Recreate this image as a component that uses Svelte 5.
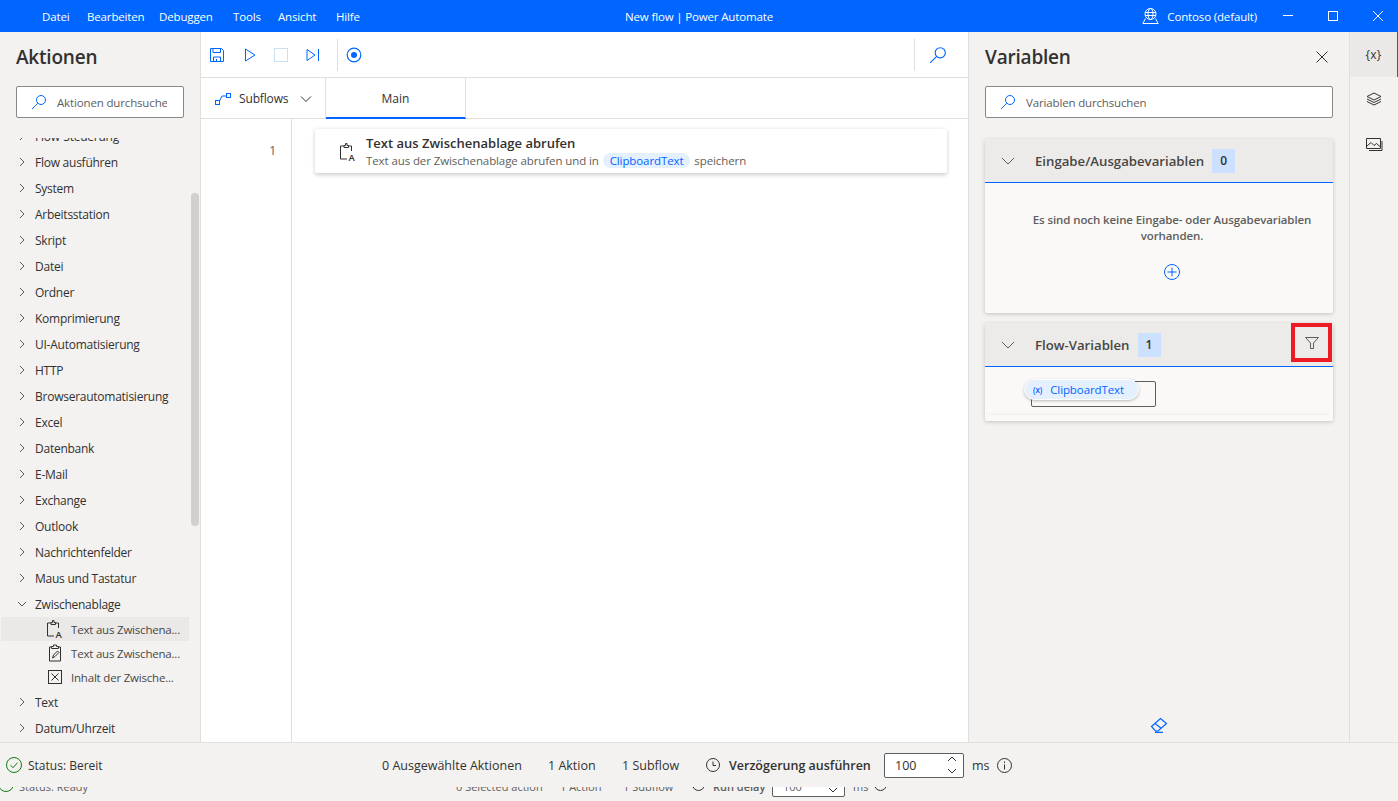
<script>
    const menus = ["Datei", "Bearbeiten", "Debuggen", "Tools", "Ansicht", "Hilfe"];
    const groupsTop = [
        "Flow ausführen", "System", "Arbeitsstation", "Skript", "Datei", "Ordner",
        "Komprimierung", "UI-Automatisierung", "HTTP", "Browserautomatisierung", "Excel",
        "Datenbank", "E-Mail", "Exchange", "Outlook", "Nachrichtenfelder", "Maus und Tastatur",
    ];
    const groupsBottom = ["Text", "Datum/Uhrzeit"];
</script>

<div class="app">
    <header class="titlebar">
        <nav class="menu">
            {#each menus as m}
                <span>{m}</span>
            {/each}
        </nav>
        <div class="title">New flow | Power Automate</div>
        <div class="right">
            <div class="env">
                <svg width="17" height="16" viewBox="0 0 17 16" fill="none" stroke="#fff" stroke-width="1">
                    <circle cx="8.500" cy="6" r="5.500" />
                    <ellipse cx="8.500" cy="6" rx="2.500" ry="5.500" />
                    <path d="M3 4.500h11M3 7.500h11M3.500 10.500 .8 15.500h15.400L13.500 10.500" />
                </svg>
                <span>Contoso (default)</span>
            </div>
            <div class="winbtns">
                <svg width="12" height="12" viewBox="0 0 12 12" stroke="#fff" fill="none"><path d="M1 5.500h10" /></svg>
                <svg width="12" height="12" viewBox="0 0 12 12" stroke="#fff" fill="none"><rect x="1.500" y="1.500" width="9" height="9" /></svg>
                <svg width="12" height="12" viewBox="0 0 12 12" stroke="#fff" fill="none"><path d="M1 1l10 10M11 1 1 11" /></svg>
            </div>
        </div>
    </header>

    <div class="body">
        <aside class="actions">
            <h1>Aktionen</h1>
            <div class="search small">
                <svg class="loupe" width="16" height="16" viewBox="0 0 16 16" fill="none" stroke="#0066ff">
                    <circle cx="10" cy="6" r="4.500" /><path d="M6.800 9.200 1 15" />
                </svg>
                <span class="ph">Aktionen durchsuchen</span>
            </div>
            <div class="tree">
                <div class="group cut">
                    <svg class="chev" width="8" height="10" viewBox="0 0 8 10" fill="none" stroke="#605e5c"><path d="M2 1l4 4-4 4" /></svg>
                    <span>Flow-Steuerung</span>
                </div>
                {#each groupsTop as g}
                    <div class="group">
                        <svg class="chev" width="8" height="10" viewBox="0 0 8 10" fill="none" stroke="#605e5c"><path d="M2 1l4 4-4 4" /></svg>
                        <span>{g}</span>
                    </div>
                {/each}
                <div class="group">
                    <svg class="chev" width="8" height="10" viewBox="0 0 8 10" fill="none" stroke="#605e5c"><path d="M0 3l4 4 4-4" /></svg>
                    <span>Zwischenablage</span>
                </div>
                <div class="leaf active">
                    <svg width="16" height="18" viewBox="0 0 16 18" fill="none" stroke="#323130">
                        <path d="M4 3H.5v13H7M11.500 8V3H8.500M4 4.500V2.500h1.500V.5h1.500v2h1.500v2z" />
                        <text x="8.500" y="18" class="a">A</text>
                    </svg>
                    <span>Text aus Zwischena...</span>
                </div>
                <div class="leaf">
                    <svg width="16" height="18" viewBox="0 0 16 18" fill="none" stroke="#323130">
                        <path d="M4.500 3H2.500v14h11V3h-2M4.500 4.500V2.500h2V1h3v1.500h2v2zM5.500 14l1-3 4-4 1.500 1.500-4 4z" />
                    </svg>
                    <span>Text aus Zwischena...</span>
                </div>
                <div class="leaf">
                    <svg width="16" height="18" viewBox="0 0 16 18" fill="none" stroke="#323130">
                        <rect x="1.500" y="2.500" width="13" height="13" /><path d="M4.500 5.500l7 7M11.500 5.500l-7 7" />
                    </svg>
                    <span>Inhalt der Zwische...</span>
                </div>
                {#each groupsBottom as g}
                    <div class="group">
                        <svg class="chev" width="8" height="10" viewBox="0 0 8 10" fill="none" stroke="#605e5c"><path d="M2 1l4 4-4 4" /></svg>
                        <span>{g}</span>
                    </div>
                {/each}
            </div>
            <div class="thumb"></div>
        </aside>

        <main class="editor">
            <div class="toolbar">
                <svg width="16" height="16" viewBox="0 0 16 16" fill="none" stroke="#0066ff">
                    <path d="M1.500 1.500h11l2 2v11h-13zM4 1.500v4h7.500v-4M4.500 14.500V10h7v4.500M7.500 12v2.500" />
                </svg>
                <svg class="gap1" width="14" height="16" viewBox="0 0 14 16" fill="none" stroke="#0066ff"><path d="M2.500 2v12l9.500-6z" /></svg>
                <svg class="gap2" width="14" height="14" viewBox="0 0 14 14" fill="none" stroke="#c7e0f4" stroke-width="1"><rect x="0.500" y="0.500" width="13" height="13" /></svg>
                <svg class="gap3" width="14" height="14" viewBox="0 0 14 14" fill="none" stroke="#0066ff"><path d="M1 1.500v11l8-5.500zM12.500 1v12" /></svg>
                <div class="tsep"></div>
                <svg width="16" height="16" viewBox="0 0 16 16" fill="#0066ff" stroke="#0066ff"><circle cx="8" cy="8" r="6.800" fill="none" stroke-width="1.200" /><circle cx="8" cy="8" r="3" stroke="none" /></svg>
                <div class="spacer"></div>
                <div class="tsep end"></div>
                <svg class="loupe2" width="18" height="18" viewBox="0 0 16 16" fill="none" stroke="#0066ff">
                    <circle cx="10" cy="6" r="4.500" /><path d="M6.800 9.200 1 15" />
                </svg>
            </div>
            <div class="tabs">
                <div class="subflows">
                    <svg width="16" height="12" viewBox="0 0 16 12" fill="none" stroke="#0066ff">
                        <rect x="0.500" y="7.500" width="4" height="4" /><rect x="11.500" y="0.500" width="4" height="4" /><path d="M4.500 8 7 3h4" />
                    </svg>
                    <span>Subflows</span>
                    <svg class="sub-chev" width="12" height="8" viewBox="0 0 12 8" fill="none" stroke="#323130"><path d="M1 1.500l5 5 5-5" /></svg>
                </div>
                <div class="tab">Main</div>
            </div>
            <div class="canvas">
                <div class="gutter">1</div>
                <div class="flow">
                    <div class="step">
                        <svg width="18" height="18" viewBox="0 0 16 18" fill="none" stroke="#323130">
                            <path d="M4 3H.5v13H7M11.500 8V3H8.500M4 4.500V2.500h1.500V.5h1.500v2h1.500v2z" />
                            <text x="8.500" y="18" class="a">A</text>
                        </svg>
                        <div class="step-text">
                            <div class="step-title">Text aus Zwischenablage abrufen</div>
                            <div class="step-sub">
                                Text aus der Zwischenablage abrufen und in
                                <span class="pill">ClipboardText</span>
                                speichern
                            </div>
                        </div>
                    </div>
                </div>
            </div>
        </main>

        <aside class="vars">
            <div class="vars-head">
                <h1>Variablen</h1>
                <svg width="12" height="12" viewBox="0 0 12 12" fill="none" stroke="#323130"><path d="M.5.500l11 11M11.500.500l-11 11" /></svg>
            </div>
            <div class="search wide">
                <svg class="loupe" width="16" height="16" viewBox="0 0 16 16" fill="none" stroke="#0066ff">
                    <circle cx="10" cy="6" r="4.500" /><path d="M6.800 9.200 1 15" />
                </svg>
                <span class="ph">Variablen durchsuchen</span>
            </div>

            <section class="panel">
                <div class="panel-head">
                    <svg width="14" height="8" viewBox="0 0 14 8" fill="none" stroke="#605e5c"><path d="M1 1l6 6 6-6" /></svg>
                    <span class="panel-title">Eingabe/Ausgabevariablen</span>
                    <span class="count">0</span>
                </div>
                <div class="panel-empty">
                    <p>Es sind noch keine Eingabe- oder Ausgabevariablen vorhanden.</p>
                    <svg width="18" height="18" viewBox="0 0 18 18" fill="none" stroke="#0066ff"><circle cx="9" cy="9" r="7.500" /><path d="M9 4.500v9M4.500 9h9" /></svg>
                </div>
            </section>

            <section class="panel second">
                <div class="panel-head">
                    <svg width="14" height="8" viewBox="0 0 14 8" fill="none" stroke="#605e5c"><path d="M1 1l6 6 6-6" /></svg>
                    <span class="panel-title">Flow-Variablen</span>
                    <span class="count">1</span>
                    <div class="filter">
                        <svg width="14" height="14" viewBox="0 0 14 14" fill="none" stroke="#605e5c"><path d="M.5 1.500h13L8.500 7v5.500h-3V7z" /></svg>
                    </div>
                </div>
                <div class="var-row">
                    <div class="var-box"></div>
                    <div class="var-chip"><span class="x">(x)</span>ClipboardText</div>
                </div>
            </section>

            <div class="spacer"></div>
            <div class="eraser">
                <svg width="18" height="16" viewBox="0 0 18 16" fill="none" stroke="#0066ff" stroke-width="1.200">
                    <path d="M1.500 9.500 10.500 1.500l6 5-8.500 7.500H5.500zM5 6.500l6.500 5M5 15.300h8" />
                </svg>
            </div>
        </aside>

        <div class="rail">
            <div class="rail-btn on">&#123;x&#125;</div>
            <div class="rail-btn">
                <svg width="16" height="15" viewBox="0 0 16 15" fill="none" stroke="#323130">
                    <path d="M8 1l7 3.500L8 8 1 4.500zM1 7 8 10.500 15 7M1 9.500 8 13 15 9.500" />
                </svg>
            </div>
            <div class="rail-btn">
                <svg width="17" height="15" viewBox="0 0 17 15" fill="none" stroke="#323130">
                    <path d="M.5 1.500h14v10H.5zM16 4v9.500H3M1 9l4-3.500 3 3 2.500-2 4 3.500" />
                </svg>
            </div>
        </div>
    </div>

    <footer class="status">
        <div class="status-main">
            <div class="ok">
                <svg width="16" height="16" viewBox="0 0 16 16" fill="none" stroke="#107c10"><circle cx="8" cy="8" r="7.500" /><path d="M4.500 8.200l2.500 2.500 4.500-5" /></svg>
                <span>Status: Bereit</span>
            </div>
            <span class="s1">0 Ausgewählte Aktionen</span>
            <span class="s2">1 Aktion</span>
            <span class="s3">1 Subflow</span>
            <svg class="clock" width="14" height="14" viewBox="0 0 14 14" fill="none" stroke="#323130"><circle cx="7" cy="7" r="6.500" /><path d="M7 3.500V7.500h3" /></svg>
            <b>Verzögerung ausführen</b>
            <div class="delay">
                <span>100</span>
                <svg width="10" height="18" viewBox="0 0 10 18" fill="none" stroke="#323130"><path d="M1 5l4-4 4 4M1 13l4 4 4-4" /></svg>
            </div>
            <span class="ms">ms</span>
            <svg class="info" width="15" height="15" viewBox="0 0 15 15" fill="none" stroke="#323130"><circle cx="7.500" cy="7.500" r="7" /><path d="M7.500 6.500v5M7.500 3.500v1.500" /></svg>
        </div>
        <div class="ghost">
            <div class="ghost-inner">
                <svg class="g-ok" width="16" height="16" viewBox="0 0 16 16" fill="none" stroke="#107c10"><circle cx="8" cy="8" r="7.500" /></svg>
                <span class="g0">Status: Ready</span>
                <span class="g1">0 Selected action</span>
                <span class="g2">1 Action</span>
                <span class="g3">1 Subflow</span>
                <svg class="g-clock" width="13" height="13" viewBox="0 0 13 13" fill="none" stroke="#323130"><circle cx="6.500" cy="6.500" r="6" /></svg>
                <b class="g4">Run delay</b>
                <div class="g-input">
                    <span>100</span>
                    <svg width="10" height="18" viewBox="0 0 10 18" fill="none" stroke="#323130"><path d="M1 13l4 4 4-4" /></svg>
                </div>
                <span class="g6">ms</span>
                <svg class="g-info" width="13" height="13" viewBox="0 0 13 13" fill="none" stroke="#323130"><circle cx="6.500" cy="6.500" r="6" /></svg>
            </div>
        </div>
    </footer>
</div>

<style>
    :global(body) {
        margin: 0;
        background: #f3f2f1;
    }

    * {
        box-sizing: border-box;
    }

    .app {
        width: 1398px;
        height: 801px;
        display: flex;
        flex-direction: column;
        overflow: hidden;
        font-family: "Open Sans", "Noto Sans", sans-serif;
        font-size: 12px;
        color: #323130;
    }

    .titlebar {
        height: 32px;
        flex: none;
        background: #0066ff;
        color: #fff;
        display: grid;
        grid-template-columns: 1fr auto 1fr;
        align-items: center;
        font-size: 11.500px;
        letter-spacing: -0.15px;
    }

    .menu {
        display: grid;
        grid-template-columns: 45px 72px 74px 45px 58px auto;
        padding-left: 42px;
    }

    .title {
        text-align: center;
        width: 240px;
    }

    .right {
        display: flex;
        justify-content: flex-end;
        align-items: center;
    }

    .env {
        display: flex;
        align-items: center;
        gap: 8px;
        margin-right: 25px;
    }

    .winbtns {
        display: flex;
        gap: 33px;
        padding-right: 14px;
    }

    .body {
        flex: 1;
        display: flex;
        min-height: 0;
    }

    h1 {
        margin: 0;
        font-size: 19px;
        font-weight: 600;
        line-height: 28px;
        letter-spacing: -0.2px;
    }

    .actions {
        width: 201px;
        border-right: 1px solid #e1dfdd;
        position: relative;
        padding-top: 11px;
        display: flex;
        flex-direction: column;
    }

    .actions h1 {
        padding-left: 16px;
    }

    .search {
        height: 32px;
        flex: none;
        background: #fff;
        border: 1px solid #8a8886;
        border-radius: 2px;
        display: flex;
        align-items: center;
        overflow: hidden;
        white-space: nowrap;
        padding-left: 14px;
        gap: 10px;
        font-size: 11.500px;
        letter-spacing: -0.15px;
    }

    .search.small {
        margin: 15px 0 0 16px;
        width: 168px;
    }

    .search.small .ph {
        width: 110px;
        overflow: hidden;
    }

    .search.wide {
        margin-top: 15px;
        width: 348px;
    }

    .ph {
        color: #605e5c;
    }

    .tree {
        margin-top: 20px;
        flex: 1;
        min-height: 0;
        overflow: hidden;
        letter-spacing: -0.25px;
    }

    .group {
        height: 26px;
        display: flex;
        align-items: center;
        padding-left: 18px;
        gap: 9px;
    }

    .group.cut {
        margin-top: -15px;
    }

    .leaf {
        height: 24px;
        width: 188px;
        margin-left: 1px;
        display: flex;
        align-items: center;
        padding-left: 46px;
        gap: 8px;
        color: #484644;
        white-space: nowrap;
        font-size: 11.500px;
        letter-spacing: -0.2px;
    }

    .leaf.active {
        background: #ebe9e8;
    }

    .a {
        font-size: 9.500px;
        fill: #323130;
        stroke: none;
        font-family: "Open Sans", sans-serif;
        font-weight: 600;
    }

    .thumb {
        position: absolute;
        left: 191px;
        top: 161px;
        width: 8px;
        height: 333px;
        border-radius: 4px;
        background: #d2d0ce;
    }

    .editor {
        width: 767px;
        background: #fff;
        display: flex;
        flex-direction: column;
    }

    .toolbar {
        height: 46px;
        border-bottom: 1px solid #e1dfdd;
        display: flex;
        align-items: center;
        padding-left: 8px;
    }

    .gap1 {
        margin-left: 18px;
    }

    .gap2 {
        margin-left: 17px;
    }

    .gap3 {
        margin-left: 18px;
    }

    .tsep {
        width: 1px;
        height: 32px;
        background: #e1dfdd;
        margin: 0 8px 0 17px;
    }

    .tsep.end {
        margin: 0;
    }

    .loupe2 {
        margin: 0 21px 0 14px;
    }

    .spacer {
        flex: 1;
    }

    .tabs {
        height: 41px;
        border-bottom: 1px solid #e1dfdd;
        display: flex;
    }

    .subflows {
        width: 125px;
        border-right: 1px solid #e1dfdd;
        display: flex;
        align-items: center;
        padding: 1px 0 0 14px;
        gap: 8px;
        font-weight: 500;
        letter-spacing: -0.15px;
    }

    .sub-chev {
        margin-left: 4px;
    }

    .tab {
        width: 140px;
        border-right: 1px solid #e1dfdd;
        border-bottom: 2px solid #0066ff;
        margin-bottom: -1px;
        padding-top: 2px;
        display: flex;
        align-items: center;
        justify-content: center;
        font-weight: 500;
    }

    .canvas {
        flex: 1;
        display: flex;
    }

    .gutter {
        width: 91px;
        border-right: 1px solid #e1dfdd;
        text-align: right;
        padding: 24px 15px 0 0;
        line-height: 16px;
        color: #605e5c;
    }

    .flow {
        flex: 1;
        padding: 10px 21px 0 23px;
    }

    .step {
        height: 44px;
        display: flex;
        align-items: center;
        padding: 1px 0 0 24px;
        gap: 9px;
        background: #fff;
        box-shadow: 0 1.500px 4px rgba(0, 0, 0, 0.2);
        border-radius: 2px;
    }

    .step-title {
        font-size: 13px;
        font-weight: 600;
        line-height: 17px;
    }

    .step-sub {
        color: #605e5c;
        font-size: 11.500px;
        letter-spacing: -0.1px;
        line-height: 17px;
        white-space: nowrap;
    }

    .pill {
        display: inline-block;
        background: #e5f0ff;
        color: #0066ff;
        border-radius: 8px;
        padding: 0 7px;
        margin: 0 1px;
        line-height: 15px;
    }

    .vars {
        width: 382px;
        border-left: 1px solid #e1dfdd;
        border-right: 1px solid #e1dfdd;
        padding: 11px 16px 0 16px;
        display: flex;
        flex-direction: column;
    }

    .vars-head {
        display: flex;
        align-items: center;
        justify-content: space-between;
        padding-right: 5px;
    }

    .panel {
        margin-top: 21px;
        width: 348px;
        background: #faf9f8;
        border-radius: 2px;
        box-shadow: 0 1px 4px rgba(0, 0, 0, 0.2);
    }

    .panel.second {
        margin-top: 10px;
    }

    .panel-head {
        height: 44px;
        background: #edebe9;
        border-bottom: 1px solid #0066ff;
        display: flex;
        align-items: center;
        padding-left: 16px;
        position: relative;
    }

    .panel-title {
        margin-left: 20px;
        font-size: 13.200px;
        font-weight: 600;
        color: #484644;
    }

    .count {
        margin-left: 8px;
        width: 23px;
        height: 24px;
        background: #cce0ff;
        display: flex;
        align-items: center;
        justify-content: center;
        font-weight: 600;
    }

    .filter {
        position: absolute;
        left: 306px;
        top: 0;
        width: 41px;
        height: 39px;
        border: 4px solid #ed1c24;
        display: flex;
        align-items: center;
        justify-content: center;
    }

    .panel-empty {
        height: 130px;
        padding: 29px 0 0 26px;
        display: flex;
        flex-direction: column;
        align-items: center;
        color: #605e5c;
    }

    .panel-empty p {
        margin: 0 0 19px;
        width: 290px;
        text-align: center;
        line-height: 16px;
        font-size: 11.500px;
        letter-spacing: -0.1px;
        font-weight: 600;
    }

    .var-row {
        height: 54px;
        position: relative;
    }

    .var-row::after {
        content: "";
        position: absolute;
        left: 4px;
        right: 4px;
        bottom: 6px;
        height: 2px;
        background: #f3f2f1;
    }

    .var-box {
        position: absolute;
        left: 46px;
        top: 14px;
        width: 125px;
        height: 26px;
        border: 1px solid #605e5c;
        border-radius: 2px;
    }

    .var-chip {
        position: absolute;
        left: 39px;
        top: 12px;
        width: 115px;
        height: 21px;
        border-radius: 11px;
        background: #e5f0ff;
        color: #0066ff;
        display: flex;
        align-items: center;
        padding-left: 8px;
        box-shadow: 0 1px 3px rgba(0, 0, 0, 0.25);
        border: 1px solid #fff;
        white-space: nowrap;
        font-size: 11.500px;
        letter-spacing: -0.1px;
    }

    .x {
        font-size: 8px;
        margin-right: 8px;
        font-weight: 600;
    }

    .eraser {
        height: 34px;
        display: flex;
        align-items: center;
        justify-content: center;
        width: 348px;
    }

    .rail {
        flex: 1;
        background: #f3f2f1;
    }

    .rail-btn {
        height: 45px;
        display: flex;
        align-items: center;
        justify-content: center;
    }

    .rail-btn.on {
        background: #ebe9e8;
        border-right: 1px solid #0066ff;
        font-size: 12px;
        letter-spacing: 0.3px;
    }

    .status {
        height: 59px;
        flex: none;
        border-top: 1px solid #e1dfdd;
        background: #f3f2f1;
        display: flex;
        flex-direction: column;
    }

    .status-main {
        height: 44px;
        display: flex;
        align-items: center;
        white-space: nowrap;
        flex: none;
        font-size: 12.500px;
    }

    .ok {
        display: flex;
        align-items: center;
        gap: 6px;
        padding-left: 6px;
        width: 382px;
        font-size: 12px;
    }

    .s1 {
        width: 166px;
    }

    .s2 {
        width: 74px;
    }

    .s3 {
        width: 84px;
    }

    .clock {
        margin-right: 9px;
    }

    .status-main b {
        font-weight: 600;
        width: 155px;
    }

    .delay {
        width: 80px;
        height: 25px;
        background: #fff;
        border: 1px solid #605e5c;
        border-radius: 2px;
        display: flex;
        align-items: center;
        justify-content: space-between;
        padding: 0 6px 0 10px;
    }

    .ms {
        margin-left: 8px;
        width: 25px;
    }

    .ghost {
        flex: 1;
        overflow: hidden;
    }

    .ghost-inner {
        margin-top: -16px;
        height: 26px;
        display: flex;
        align-items: center;
        color: #605e5c;
        white-space: nowrap;
        font-size: 11px;
    }

    .ghost-inner span,
    .ghost-inner b {
        padding-top: 5px;
    }

    .g-ok {
        margin-left: -2px;
        margin-right: 5px;
        flex: none;
    }

    .g0 { width: 437px; }
    .g1 { width: 104px; }
    .g2 { width: 63px; }
    .g3 { width: 69px; }

    .g-clock {
        flex: none;
        margin-right: 8px;
    }

    .g4 {
        width: 59px;
        font-weight: 600;
    }

    .g-input {
        width: 73px;
        height: 25px;
        background: #fff;
        border: 1px solid #605e5c;
        border-radius: 2px;
        display: flex;
        align-items: center;
        justify-content: space-between;
        padding: 0 6px 0 10px;
    }

    .g6 {
        margin-left: 8px;
        width: 21px;
    }

    .g-info {
        flex: none;
    }
</style>
